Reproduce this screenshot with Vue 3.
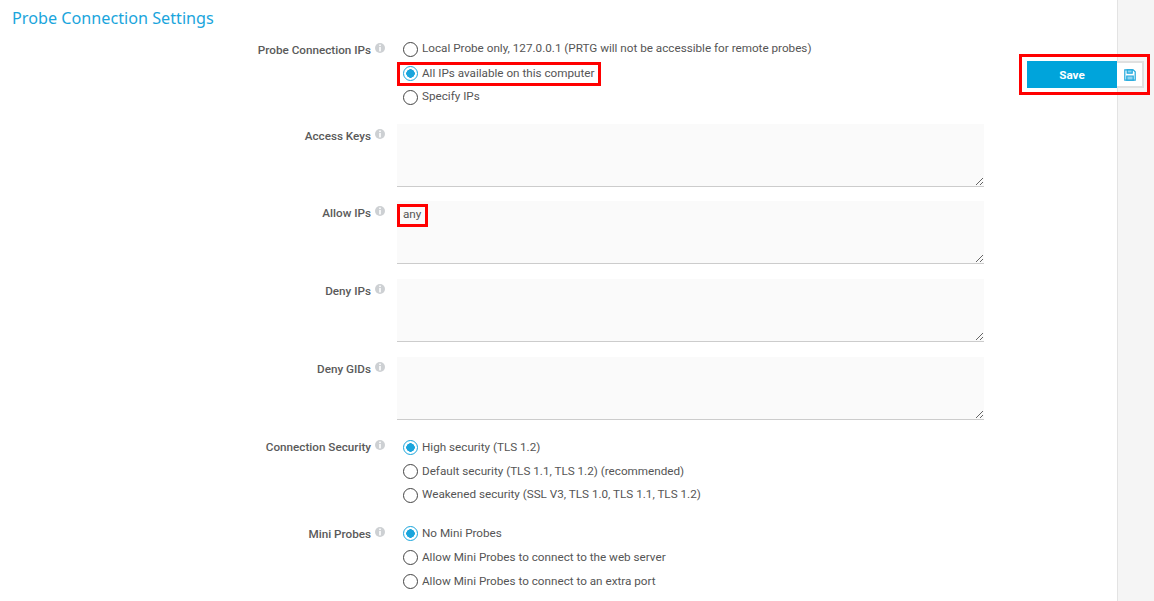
<script setup>
const rows = [
  { type: 'radio', label: 'Probe Connection IPs', name: 'ips', options: [
    { text: 'Local Probe only, 127.0.0.1 (PRTG will not be accessible for remote probes)' },
    { text: 'All IPs available on this computer', checked: true, mark: true },
    { text: 'Specify IPs' }
  ] },
  { type: 'area', label: 'Access Keys', value: '' },
  { type: 'area', label: 'Allow IPs', value: 'any', mark: true },
  { type: 'area', label: 'Deny IPs', value: '' },
  { type: 'area', label: 'Deny GIDs', value: '' },
  { type: 'radio', label: 'Connection Security', name: 'sec', options: [
    { text: 'High security (TLS 1.2)', checked: true },
    { text: 'Default security (TLS 1.1, TLS 1.2) (recommended)' },
    { text: 'Weakened security (SSL V3, TLS 1.0, TLS 1.1, TLS 1.2)' }
  ] },
  { type: 'radio', label: 'Mini Probes', name: 'mini', options: [
    { text: 'No Mini Probes', checked: true },
    { text: 'Allow Mini Probes to connect to the web server' },
    { text: 'Allow Mini Probes to connect to an extra port' }
  ] }
]
</script>

<template>
  <div class="page">
    <main class="main">
      <h1 class="title">Probe Connection Settings</h1>
      <div class="form">
        <div v-for="row in rows" :key="row.label" class="row" :class="[row.type, row.name]">
          <div class="label">
            <span>{{ row.label }}</span>
            <svg class="info" viewBox="0 0 10 10" width="10" height="10">
              <circle cx="5" cy="5" r="5" fill="#cdd0d3" />
              <rect x="4.2" y="1.6" width="1.6" height="1.5" fill="#fff" />
              <rect x="4.2" y="4" width="1.6" height="4.4" fill="#fff" />
            </svg>
          </div>
          <div v-if="row.type === 'radio'" class="options">
            <label v-for="o in row.options" :key="o.text" class="option" :class="{ marked: o.mark }">
              <span class="radio" :class="{ on: o.checked }"></span>
              <span class="otext">{{ o.text }}</span>
            </label>
          </div>
          <div v-else class="areawrap">
            <textarea class="area-input" :value="row.value" spellcheck="false"></textarea>
            <span v-if="row.mark" class="anybox"></span>
          </div>
        </div>
      </div>
    </main>
    <aside class="gutter"></aside>
    <div class="savebox">
      <button class="save">Save</button>
      <span class="saveicon">
        <svg viewBox="0 0 12 12" width="12" height="12" stroke="#1da8dd" stroke-width="1.2">
          <path d="M.8.8h8.4l2 2v8.4H.8z" fill="#fff" />
          <path d="M3.2.8v3.4h5V.8z" fill="#8ed4f0" />
          <path d="M2.8 11.2V7h6.4v4.2z" fill="#8ed4f0" />
        </svg>
      </span>
    </div>
  </div>
</template>

<style>
html, body { margin: 0; background: #fff; }
</style>

<style scoped>
.page {
  position: relative;
  display: flex;
  width: 1154px;
  height: 601px;
  overflow: hidden;
  font-family: Roboto, "Liberation Sans", sans-serif;
  font-size: 11.7px;
  color: #555;
}
.main {
  width: 1118px;
  flex: none;
  box-sizing: border-box;
  border-right: 1px solid #e3e3e3;
  background: #fff;
}
.gutter { flex: 1; background: #f5f5f5; }
.title {
  margin: 0;
  padding: 8px 0 0 12px;
  height: 37px;
  box-sizing: border-box;
  font-family: "Noto Sans", "Open Sans", sans-serif;
  font-size: 16.2px;
  line-height: 21px;
  font-weight: 400;
  color: #1aa5dc;
}
.form { display: flex; flex-direction: column; }
.row { display: flex; width: 984px; }
.row.radio { margin-bottom: 15px; }
.row.area { margin-bottom: 15px; }
.row.radio + .row.area { margin-bottom: 14px; }
.row.radio + .row.radio { margin-bottom: 0; margin-top: -1px; }
.label {
  width: 386px;
  flex: none;
  display: flex;
  justify-content: flex-end;
  gap: 4px;
  font-weight: 500;
  color: #5a5a5a;
  box-sizing: border-box;
  padding-right: 1px;
}
.radio .label { padding-top: 6px; line-height: 14px; }
.sec .label { padding-top: 5px; }
.area .label { padding-top: 5px; line-height: 14px; }
.options { margin-left: 11px; display: flex; flex-direction: column; }
.option {
  position: relative;
  display: flex;
  align-items: center;
  height: 24px;
  gap: 4px;
  padding-left: 6px;
  color: #555;
}
.ips .option:nth-child(odd) .otext,
.sec .option:nth-child(3) .otext { padding-bottom: 2px; }
.option.marked::after {
  content: "";
  position: absolute;
  left: 0;
  top: 1px;
  width: 204px;
  height: 24px;
  box-sizing: border-box;
  border: 3px solid #f00;
}
.option .radio {
  width: 15px;
  height: 15px;
  box-sizing: border-box;
  border: 1.5px solid #444;
  border-radius: 50%;
  background: #fff;
  flex: none;
}
.option .radio.on {
  border-color: #1aa5dc;
  background: radial-gradient(circle, #1aa5dc 0 4px, #fff 4.5px);
}
.otext { white-space: nowrap; }
.areawrap { position: relative; margin-left: 11px; width: 587px; height: 63px; }
.area-input {
  display: block;
  width: 587px;
  height: 63px;
  box-sizing: border-box;
  margin: 0;
  padding: 6px 6px;
  border: none;
  border-bottom: 1px solid #ccc;
  background: #fafafa;
  font: 11.7px/14px Roboto, "Liberation Sans", sans-serif;
  color: #555;
  outline: none;
}
.anybox {
  position: absolute;
  left: 0;
  top: 3px;
  width: 31px;
  height: 23px;
  box-sizing: border-box;
  border: 3px solid #f00;
  pointer-events: none;
}
.savebox {
  position: absolute;
  left: 1019px;
  top: 54px;
  width: 131px;
  height: 41px;
  box-sizing: border-box;
  border: 3px solid #f00;
  padding: 4px 3px 0 5px;
  display: flex;
  align-items: flex-start;
}
.save {
  width: 90px;
  height: 27px;
  padding: 0;
  border: none;
  background: #00a4db;
  color: #fff;
  font: 700 11.7px Roboto, "Liberation Sans", sans-serif;
}
.saveicon {
  width: 27px;
  height: 27px;
  box-sizing: border-box;
  background: #fff;
  border: 2px solid #e0e0e0;
  border-left: none;
  display: flex;
  align-items: center;
  justify-content: center;
}
</style>
